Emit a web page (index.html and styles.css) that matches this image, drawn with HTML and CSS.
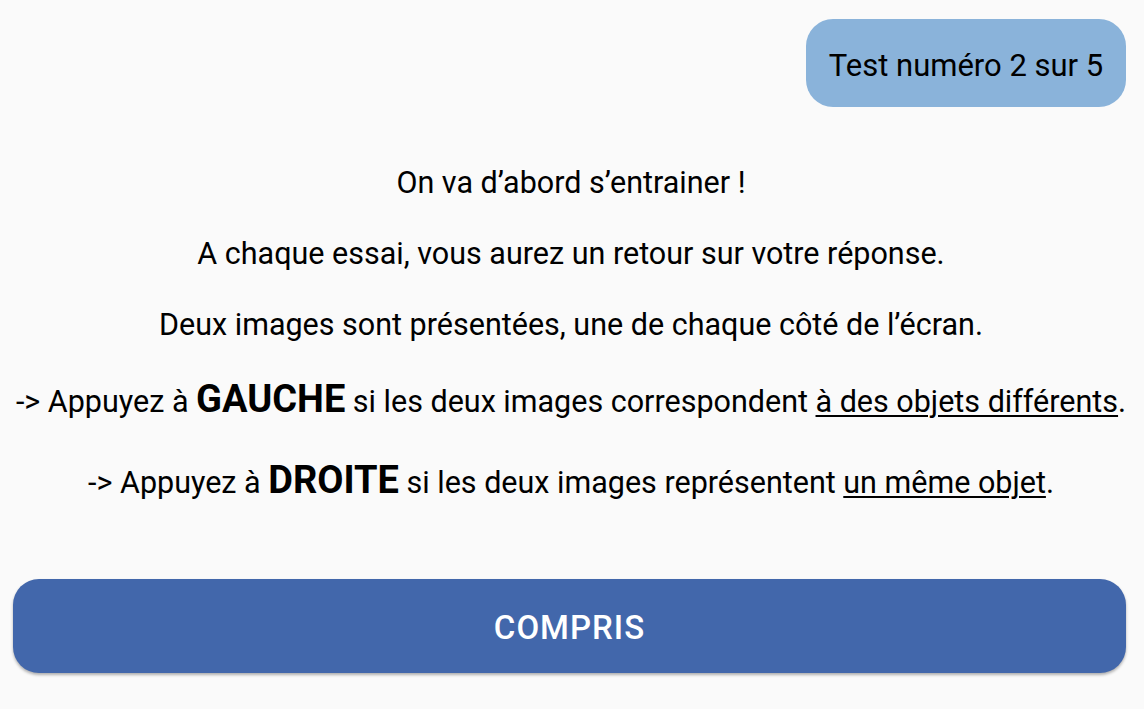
FILE: index.html
```html
<!DOCTYPE html>
<html lang="fr">
<head>
<meta charset="utf-8">
<link rel="stylesheet" href="styles.css">
</head>
<body>
<div class="page">
  <header class="top">
    <div class="pill">Test numéro 2 sur 5</div>
  </header>
  <main class="intro">
    <p class="line">On va d’abord s’entrainer !</p>
    <p class="line">A chaque essai, vous aurez un retour sur votre réponse.</p>
    <p class="line">Deux images sont présentées, une de chaque côté de l’écran.</p>
    <p class="line big">-&gt; Appuyez à <strong>GAUCHE</strong> si les deux images correspondent <u>à des objets différents</u>.</p>
    <p class="line big">-&gt; Appuyez à <strong>DROITE</strong> si les deux images représentent <u>un même objet</u>.</p>
  </main>
  <div class="actions">
    <button class="btn">COMPRIS</button>
  </div>
</div>
</body>
</html>
```

FILE: styles.css
```css
html, body {
  margin: 0;
  padding: 0;
  background: #fafafa;
}
body {
  font-family: Roboto, "Noto Sans", sans-serif;
  color: #000;
}
.page {
  width: 1144px;
  height: 709px;
  display: flex;
  flex-direction: column;
}
.top {
  display: flex;
  justify-content: flex-end;
  padding: 19px 18px 0 0;
}
.pill {
  width: 320px;
  height: 88px;
  box-sizing: border-box;
  padding-top: 4px;
  border-radius: 27px;
  background: #8ab3da;
  display: flex;
  align-items: center;
  justify-content: center;
  font-size: 31px;
}
.intro {
  display: flex;
  flex-direction: column;
  align-items: center;
  gap: 35px;
  padding: 58px 2px 0 0;
}
.line {
  margin: 0;
  font-size: 30.5px;
  line-height: 36px;
  text-align: center;
  white-space: nowrap;
}
.line.big {
  line-height: 44px;
  margin-top: 2px;
}
.line strong {
  font-size: 38px;
  line-height: 1;
  font-weight: 700;
}
.line u {
  text-decoration-thickness: 2px;
  text-underline-offset: 3px;
}
.actions {
  padding: 0 18px 0 13px;
  margin-top: auto;
  margin-bottom: 36px;
}
.btn {
  width: 100%;
  height: 94px;
  padding-top: 4px;
  border: none;
  border-radius: 26px;
  background: #4267ab;
  color: #fff;
  font-family: Roboto, "Noto Sans", sans-serif;
  font-size: 33px;
  letter-spacing: 1px;
  font-weight: 500;
  box-shadow: 0 2px 3px rgba(0,0,0,0.3);
  display: block;
}
```
